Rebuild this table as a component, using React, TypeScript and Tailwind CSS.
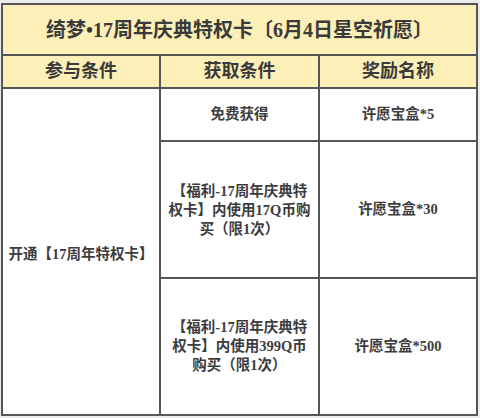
export default function App() {
  // 数字用衬线体，中文用黑体，跟原图一致
  const font = { fontFamily: '"Liberation Serif", "Noto Sans CJK SC", serif' };

  return (
    <div className="w-[480px] h-[418px] bg-[#ececec] pt-[3px] pl-[1px]" style={font}>
      <div className="w-[477px] bg-[#565656] p-[2px] grid gap-[2px] grid-cols-[156px_157px_156px] grid-rows-[49px_31px_51px_135px_135px] text-[#3d3d3d]">
        {/* 标题 */}
        <div className="col-span-3 bg-[#fcefb7] flex items-center justify-center text-[20px] font-bold text-[#3a3a3a] whitespace-nowrap">
          绮梦•17周年庆典特权卡〔6月4日星空祈愿〕
        </div>

        {/* 表头 */}
        <div className="bg-[#fcefb7] flex items-center justify-center text-[18px] font-bold text-[#3a3a3a]">参与条件</div>
        <div className="bg-[#fcefb7] flex items-center justify-center text-[18px] font-bold text-[#3a3a3a]">获取条件</div>
        <div className="bg-[#fcefb7] flex items-center justify-center text-[18px] font-bold text-[#3a3a3a]">奖励名称</div>

        {/* 参与条件 */}
        <div className="row-span-3 bg-white flex items-center justify-center text-[14.5px] font-bold whitespace-nowrap pt-[6px]">
          开通【17周年特权卡】
        </div>

        {/* 第一行 */}
        <div className="bg-white flex items-center justify-center text-[14.5px] font-bold">免费获得</div>
        <div className="bg-white flex items-center justify-center text-[14.5px] font-bold">许愿宝盒*5</div>

        {/* 第二行 */}
        <div className="bg-white flex items-center justify-center text-center text-[14.5px] font-bold leading-[19px] whitespace-nowrap pt-[2px]">
          <div>
            【福利-17周年庆典特
            <br />
            权卡】内使用17Q币购
            <br />
            买（限1次）
          </div>
        </div>
        <div className="bg-white flex items-center justify-center text-[14.5px] font-bold">许愿宝盒*30</div>

        {/* 第三行 */}
        <div className="bg-white flex items-center justify-center text-center text-[14.5px] font-bold leading-[19px] whitespace-nowrap">
          <div>
            【福利-17周年庆典特
            <br />
            权卡】内使用399Q币
            <br />
            购买（限1次）
          </div>
        </div>
        <div className="bg-white flex items-center justify-center text-[14.5px] font-bold">许愿宝盒*500</div>
      </div>
    </div>
  );
}
